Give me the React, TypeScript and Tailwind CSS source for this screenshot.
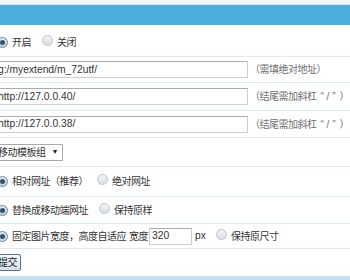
import React from "react";

const font = { fontFamily: '"Liberation Sans", "Noto Sans CJK SC", sans-serif' };

function Radio({ checked }: { checked?: boolean }) {
  return (
    <span
      className={
        "inline-flex items-center justify-center w-[11px] h-[11px] rounded-full border shrink-0 " +
        (checked
          ? "border-[#6f889c] bg-gradient-to-b from-[#dfe8ef] to-[#c3d2de]"
          : "border-[#bcc4cb] bg-gradient-to-b from-[#f3f5f7] to-[#d9dee3]")
      }
    >
      {checked && <span className="w-[5px] h-[5px] rounded-full bg-[#36536e]" />}
    </span>
  );
}

function Row({ h, children, last }: { h: string; children: React.ReactNode; last?: boolean }) {
  return (
    <div className={"flex items-center " + h + (last ? "" : " border-b border-[#d9ecf5]")}>
      <div className="flex items-center ml-[-3px]">{children}</div>
    </div>
  );
}

function TextInput({ value }: { value: string }) {
  return (
    <div className="ml-[-3px] w-[254px] h-[17px] border border-[#cfcfcf] border-t-[#ababab] bg-white flex items-center pl-[3px] text-[10.3px] tracking-normal text-[#333]">
      {value}
    </div>
  );
}

function SlashNote() {
  return (
    <span className="ml-[2px] text-[#707070] whitespace-pre flex items-center">
      <span>（结尾需加斜杠</span>
      <span className="ml-[4px] tracking-normal">“ / ”</span>
      <span className="ml-[4px]">）</span>
    </span>
  );
}

export default function App() {
  return (
    <div className="w-[350px] h-[280px] overflow-hidden bg-white text-[10px] tracking-[-0.5px] text-[#333] relative" style={font}>
      <div className="h-[5px] bg-[#eef6fa] border-b border-[#cfe6f1]" />
      <div className="h-[20px] bg-[#4aaedc]" />
      <Row h="h-[32px] pt-[3px]">
        <Radio checked />
        <span className="ml-[4px]">开启</span>
        <span className="ml-[11px]"><Radio /></span>
        <span className="ml-[4px]">关闭</span>
      </Row>
      <Row h="h-[26px]">
        <TextInput value="g:/myextend/m_72utf/" />
        <span className="ml-[2px] text-[#707070]">（需填绝对地址）</span>
      </Row>
      <Row h="h-[28px]">
        <TextInput value="http://127.0.0.40/" />
        <SlashNote />
      </Row>
      <Row h="h-[27px]">
        <TextInput value="http://127.0.0.38/" />
        <SlashNote />
      </Row>
      <Row h="h-[29px]">
        <div className="ml-[-3px] h-[17px] border border-[#a9a9a9] bg-white flex items-center pl-[3px] pr-[4px] gap-[6px]">
          <span>移动模板组</span>
          <span className="text-[7px] text-[#222]">▼</span>
        </div>
      </Row>
      <Row h="h-[30px]">
        <Radio checked />
        <span className="ml-[4px]">相对网址（推荐）</span>
        <span className="ml-[9px]"><Radio /></span>
        <span className="ml-[4px]">绝对网址</span>
      </Row>
      <Row h="h-[27px]">
        <Radio checked />
        <span className="ml-[4px]">替换成移动端网址</span>
        <span className="ml-[11px]"><Radio /></span>
        <span className="ml-[4px]">保持原样</span>
      </Row>
      <Row h="h-[25px]">
        <Radio checked />
        <span className="ml-[4px]">固定图片宽度，高度自适应</span>
        <span className="ml-[3px]">宽度</span>
        <div className="ml-[1px] w-[43px] h-[17px] border border-[#cfcfcf] border-t-[#ababab] flex items-center pl-[2px] text-[10.3px] tracking-normal">320</div>
        <span className="ml-[3px] text-[10.3px] tracking-normal">px</span>
        <span className="ml-[10px]"><Radio /></span>
        <span className="ml-[4px]">保持原尺寸</span>
      </Row>
      <Row h="h-[27px]" last>
        <button className="ml-[-3px] h-[17px] px-[3px] border border-[#5e7385] rounded-[2px] bg-gradient-to-b from-[#f4f8fb] to-[#d3dfe8] text-[10px] leading-none text-[#222]">
          提交
        </button>
      </Row>
      <div className="absolute left-0 right-0 bottom-0 h-[4px] bg-[#c3e1ee]" />
    </div>
  );
}
